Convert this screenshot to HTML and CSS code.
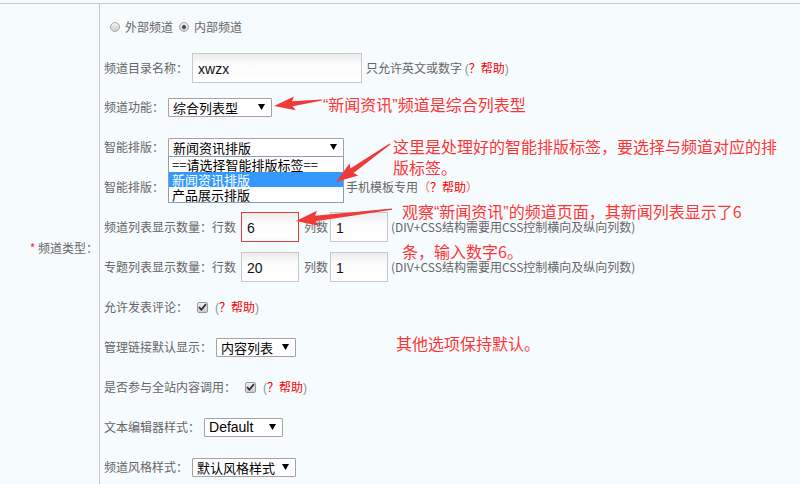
FILE: index.html
```html
<!DOCTYPE html>
<html lang="zh-CN">
<head>
<meta charset="utf-8">
<title>频道设置</title>
<link rel="stylesheet" href="styles.css">
</head>
<body>
<div class="page">
  <div class="frame">
    <div class="side"><span class="req">*</span>&nbsp;频道类型：</div>
    <div class="main">
      <div class="row">
        <span class="radio"></span><span class="opt">外部频道</span>
        <span class="radio on"></span><span class="opt">内部频道</span>
      </div>
      <div class="row r1">
        <span class="lbl">频道目录名称：</span>
        <input class="inp dir" type="text" value="xwzx" readonly>
        <span class="note">只允许英文或数字 <span class="par">(</span><span class="help">？帮助</span><span class="par">)</span></span>
      </div>
      <div class="row">
        <span class="lbl">频道功能：</span>
        <span class="sel w104"><span>综合列表型</span><svg class="arr" width="7" height="6" viewBox="0 0 7 6"><path d="M0 0H7L3.5 6Z"/></svg></span>
      </div>
      <div class="row">
        <span class="lbl">智能排版：</span>
        <span class="sel w176 open"><span>新闻资讯排版</span><svg class="arr" width="7" height="6" viewBox="0 0 7 6"><path d="M0 0H7L3.5 6Z"/></svg>
          <span class="list">
            <span class="item">==请选择智能排版标签==</span>
            <span class="item hi">新闻资讯排版</span>
            <span class="item">产品展示排版</span>
          </span>
        </span>
      </div>
      <div class="row">
        <span class="lbl">智能排版：</span>
        <span class="sel w176"></span>
        <span class="note n2">手机模板专用<span class="par2">（</span><span class="help">？帮助</span><span class="par2">）</span></span>
      </div>
      <div class="row">
        <span class="lbl">频道列表显示数量：行数</span>
        <input class="inp num focus" type="text" value="6" readonly>
        <span class="lbl gap">列数</span>
        <input class="inp num" type="text" value="1" readonly>
        <span class="note n3">(DIV+CSS结构需要用CSS控制横向及纵向列数)</span>
      </div>
      <div class="row">
        <span class="lbl">专题列表显示数量：行数</span>
        <input class="inp num" type="text" value="20" readonly>
        <span class="lbl gap">列数</span>
        <input class="inp num" type="text" value="1" readonly>
        <span class="note n3">(DIV+CSS结构需要用CSS控制横向及纵向列数)</span>
      </div>
      <div class="row">
        <span class="lbl">允许发表评论：</span>
        <span class="chk"><svg width="9" height="8" viewBox="0 0 9 8"><path d="M1 4.2L3.4 6.6L8 1.2" fill="none" stroke="#333" stroke-width="1.8"/></svg></span>
        <span class="hw"><span class="par">(</span><span class="help">？帮助</span><span class="par">)</span></span>
      </div>
      <div class="row">
        <span class="lbl">管理链接默认显示：</span>
        <span class="sel w80"><span>内容列表</span><svg class="arr" width="7" height="6" viewBox="0 0 7 6"><path d="M0 0H7L3.5 6Z"/></svg></span>
      </div>
      <div class="row">
        <span class="lbl">是否参与全站内容调用：</span>
        <span class="chk"><svg width="9" height="8" viewBox="0 0 9 8"><path d="M1 4.2L3.4 6.6L8 1.2" fill="none" stroke="#333" stroke-width="1.8"/></svg></span>
        <span class="hw"><span class="par">(</span><span class="help">？帮助</span><span class="par">)</span></span>
      </div>
      <div class="row">
        <span class="lbl">文本编辑器样式：</span>
        <span class="sel w79 latin"><span>Default</span><svg class="arr" width="7" height="6" viewBox="0 0 7 6"><path d="M0 0H7L3.5 6Z"/></svg></span>
      </div>
      <div class="row">
        <span class="lbl">频道风格样式：</span>
        <span class="sel w104"><span>默认风格样式</span><svg class="arr" width="7" height="6" viewBox="0 0 7 6"><path d="M0 0H7L3.5 6Z"/></svg></span>
      </div>
    </div>
  </div>

  <div class="ann a1"><span class="q">“</span>新闻资讯<span class="q">”</span>频道是综合列表型</div>
  <div class="ann a2">这里是处理好的智能排版标签，要选择与频道对应的排<br>版标签。</div>
  <div class="ann a3">观察<span class="q">“</span>新闻资讯<span class="q">”</span>的频道页面，其新闻列表显示了6<br>条，输入数字6。</div>
  <div class="ann a4">其他选项保持默认。</div>

  <svg class="arrows" width="800" height="484" viewBox="0 0 800 484">
    <polygon transform="translate(274 106) rotate(-7.1)" points="0,0 21,-7 18.5,-2.6 48.4,-0.6 48.4,0.6 18.5,2.6 21,7"/>
    <polygon transform="translate(336 182) rotate(-35.1)" points="0,0 22,-7.5 19.5,-2.8 66,-0.6 66,0.6 19.5,2.8 22,7.5"/>
    <polygon transform="translate(296 221) rotate(-7.1)" points="0,0 22,-7.5 19.5,-2.8 96.7,-0.6 96.7,0.6 19.5,2.8 22,7.5"/>
  </svg>
</div>
</body>
</html>
```

FILE: styles.css
```css
html, body {
  margin: 0;
  padding: 0;
  background: #f6fbfe;
}

body {
  font-family: "Noto Sans CJK SC", "Liberation Sans", sans-serif;
  font-size: 12px;
  color: #666;
}

.page {
  position: relative;
  width: 800px;
  height: 484px;
  overflow: hidden;
  padding-top: 3px;
  box-sizing: border-box;
}

.frame {
  display: grid;
  grid-template-columns: 100px 1fr;
  border-top: 1px solid #c9c9c9;
}

.side {
  box-sizing: border-box;
  border-right: 1px solid #c9c9c9;
  display: flex;
  align-items: center;
  justify-content: flex-end;
  padding-right: 1px;
  line-height: 16px;
  white-space: nowrap;
}

.req {
  color: #f33;
}

.main {
  padding: 3px 0 5px 4px;
}

.row {
  height: 40px;
  display: flex;
  align-items: center;
  white-space: nowrap;
  line-height: 16px;
}

.row.r1 {
  margin-top: 2px;
  height: 38px;
}

.lbl, .opt, .note {
  color: #666;
}

.radio {
  width: 10px;
  height: 10px;
  box-sizing: border-box;
  border-radius: 50%;
  border: 1px solid #a9a9a9;
  background: linear-gradient(#f2f2f2, #cfcfcf);
  margin: 0 5px 0 6px;
  position: relative;
}

.radio.on::after {
  content: "";
  position: absolute;
  left: 2px;
  top: 2px;
  width: 4px;
  height: 4px;
  border-radius: 50%;
  background: #444;
}

.inp {
  box-sizing: border-box;
  height: 30px;
  border: 1px solid #c8c8c8;
  background: linear-gradient(#ececec, #fbfbfb 35%, #fff);
  font-family: "Liberation Sans", sans-serif;
  font-size: 15px;
  color: #111;
  padding: 2px 0 0 5px;
  margin: 0;
  outline: none;
}

.inp.dir {
  width: 170px;
  margin-left: 4px;
  font-size: 14px;
}

.inp.num {
  width: 58px;
  margin-left: 5px;
  font-size: 14px;
}

.gap + .inp.num {
  margin-left: 2px;
}

.inp.focus {
  border-color: #e83a3a;
}

.gap {
  margin-left: 5px;
}

.note {
  margin-left: 4px;
}

.note.n2 {
  margin-left: 2px;
}

.note.n3 {
  margin-left: 3px;
}

.par {
  color: #8a96a3;
  font-family: "Liberation Sans", sans-serif;
}

.par2 {
  color: #e86b6b;
}

.help {
  color: #f00;
}

.hw {
  margin-left: 7px;
}

.sel {
  position: relative;
  box-sizing: border-box;
  height: 19px;
  margin-left: 4px;
  border: 1px solid #a3a3a3;
  border-radius: 1px;
  background: #fff;
  display: inline-flex;
  align-items: center;
  justify-content: space-between;
  padding: 0 6px 0 4px;
  font-size: 13px;
  color: #000;
  line-height: 17px;
}

.sel.latin {
  font-family: "Liberation Sans", sans-serif;
  font-size: 14px;
}

.w104 { width: 104px; }
.w176 { width: 176px; }
.w80 { width: 80px; }
.w79 { width: 79px; }

.arr {
  fill: #000;
  flex: none;
}

.list {
  position: absolute;
  left: -1px;
  top: 17px;
  width: 176px;
  box-sizing: border-box;
  border: 1px solid #8d9db3;
  background: #fff;
  display: flex;
  flex-direction: column;
  z-index: 2;
  padding: 0;
}

.item {
  height: 15px;
  line-height: 15px;
  padding-left: 3px;
  font-size: 13px;
  color: #000;
}

.item.hi {
  background: #3399ff;
  color: #fff;
}

.chk {
  width: 11px;
  height: 11px;
  box-sizing: border-box;
  border: 1px solid #9a9a9a;
  border-radius: 2px;
  background: linear-gradient(#f0f0f0, #cdcdcd);
  margin-left: 9px;
  display: inline-flex;
  align-items: center;
  justify-content: center;
}

.ann {
  position: absolute;
  font-size: 16px;
  line-height: 20px;
  color: #ff3535;
  white-space: nowrap;
  z-index: 3;
}

.q {
  font-family: "Liberation Sans", sans-serif;
}

.a1 { left: 323px; top: 94px; }
.a2 { left: 393px; top: 136px; line-height: 21px; }
.a3 { left: 402px; top: 192px; line-height: 38px; }
.a4 { left: 396px; top: 333px; }

.arrows {
  position: absolute;
  left: 0;
  top: 0;
  z-index: 4;
  fill: #f03a3a;
  pointer-events: none;
}
```
